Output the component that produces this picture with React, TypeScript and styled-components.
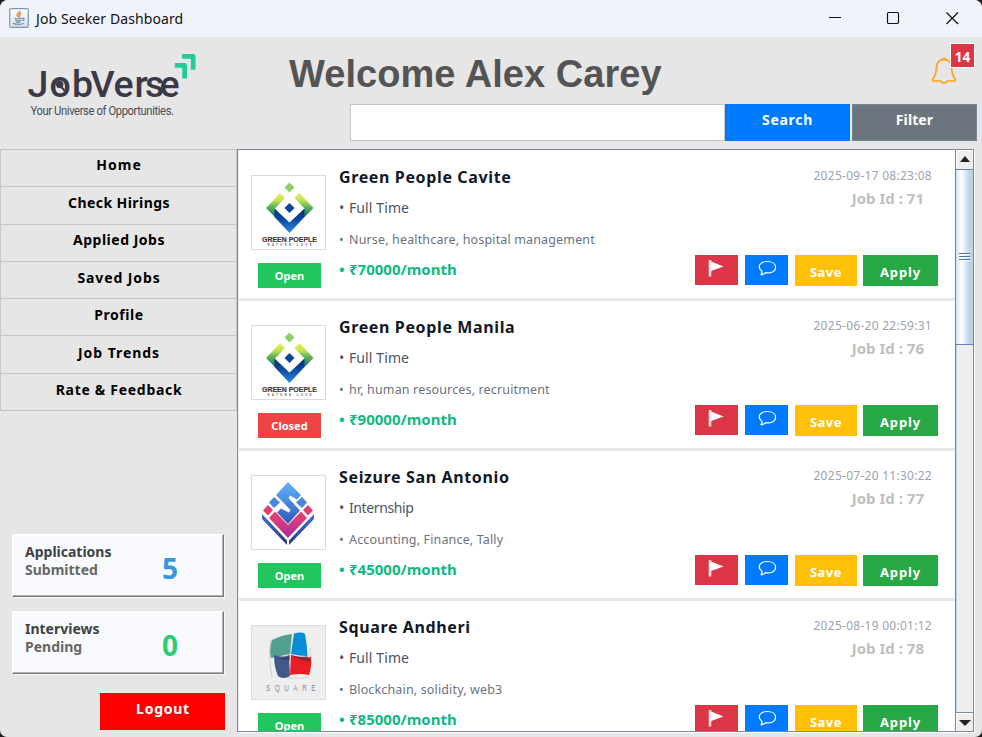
import React from 'react';
import styled, { createGlobalStyle } from 'styled-components';

const GlobalStyle = createGlobalStyle`
  * { box-sizing: border-box; }
  body { margin: 0; background: #1d1d20; font-family: "Noto Sans", "Open Sans", sans-serif; }
  button, input { font-family: inherit; margin: 0; padding: 0; border: 0; border-radius: 0; }
  svg { display: block; }
`;

const Window = styled.div`
  width: 982px;
  height: 737px;
  display: flex;
  flex-direction: column;
  overflow: hidden;
  background: #e6e6e6;
  border-radius: 8px 8px 7px 7px;
`;

const TitleBar = styled.header`
  height: 37px;
  flex: none;
  display: flex;
  align-items: center;
  padding: 0 16px 0 9px;
  background: #f0f3fa;
`;

const AppIcon = styled.svg`
  width: 20px;
  height: 20px;
  margin-top: -2px;
`;

const WindowTitle = styled.div`
  flex: 1;
  margin-left: 7px;
  font-size: 14px;
  letter-spacing: 0.1px;
  line-height: 20px;
  color: #111;
`;

const WindowControls = styled.div`
  display: flex;
  align-items: center;
  gap: 38px;
  margin-top: -1px;
  padding-right: 4px;
`;

const Header = styled.section`
  height: 112px;
  flex: none;
  display: flex;
`;

const Brand = styled.div`
  width: 237px;
  padding: 13px 0 0 26px;
`;

const HeaderMain = styled.div`
  flex: 1;
  display: flex;
  flex-direction: column;
`;

const HeaderTop = styled.div`
  height: 67px;
  display: flex;
  justify-content: space-between;
`;

const Welcome = styled.h1`
  margin: 15px 0 0 52px;
  font: bold 38px/44px "Liberation Sans", Arial, sans-serif;
  letter-spacing: 0.05px;
  color: #545454;
`;

const Notifications = styled.div`
  position: relative;
  width: 45px;
  margin-right: 7px;
  padding: 20px 0 0 1px;
`;

const Badge = styled.span`
  position: absolute;
  top: 6px;
  right: 0;
  width: 25px;
  height: 25px;
  border: 1px solid #fff;
  background: #dc3545;
  color: #fff;
  font-size: 13.5px;
  font-weight: 700;
  line-height: 26px;
  text-align: center;
`;

const SearchRow = styled.div`
  display: flex;
  height: 37px;
  margin-left: 113px;
`;

const SearchInput = styled.input`
  width: 375px;
  height: 37px;
  && { border: 1px solid #c6c6c6; }
  background: #fff;
  outline: none;
`;

const HeaderButton = styled.button<{ $bg: string; $edge?: string; $tracking?: number }>`
  width: 125px;
  height: 37px;
  && { border: 1px solid ${p => p.$edge ?? p.$bg}; padding-bottom: 6px; }
  background: ${p => p.$bg};
  color: #fff;
  font-size: 14px;
  font-weight: 700;
  line-height: 20px;
  letter-spacing: ${p => p.$tracking ?? 0}px;
  & + & { margin-left: 2px; }
`;

const Body = styled.div`
  flex: 1;
  min-height: 0;
  display: flex;
`;

const Sidebar = styled.aside`
  width: 237px;
  display: flex;
  flex-direction: column;
`;

const Nav = styled.nav`
  height: 262px;
  display: grid;
  grid-template-rows: repeat(7, 1fr);
  border: 1px solid #c8c8c8;
  border-top: 0;
`;

const NavItem = styled.button<{ $tracking: number }>`
  background: #e6e6e6;
  && { border-top: 1px solid #c6c6c6; padding: 0 0 5px 1px; box-shadow: 0 1px 0 #c6c6c6; }
  color: #000;
  font-size: 14px;
  font-weight: 700;
  line-height: 20px;
  letter-spacing: ${p => p.$tracking}px;
  &&:first-child { padding-bottom: 6px; }
  &&:nth-child(n + 4) { padding-bottom: 4px; }
`;

const Stats = styled.div`
  display: flex;
  flex-direction: column;
  gap: 13px;
  margin: 123px 0 0 12px;
`;

const StatCard = styled.div`
  width: 212px;
  height: 63px;
  display: flex;
  background: #f8fafd;
  border: 1px solid;
  border-color: #fff #7a7a7a #7a7a7a #fff;
  box-shadow: inset -1px -1px 0 #b0b0b0, inset 1px 1px 0 #fff, 1px 1px 0 #f8f8f8;
  & + & { margin-top: 1px; }
`;

const StatLabel = styled.div`
  width: 149px;
  padding: 7px 0 0 12px;
  font-size: 14px;
  font-weight: 700;
  line-height: 19px;
  color: #3f4246;
  span { display: block; margin-top: -1px; color: #666; }
`;

const StatValue = styled.div<{ $color: string }>`
  padding-top: 14px;
  font-size: 28px;
  font-weight: 700;
  line-height: 38px;
  color: ${p => p.$color};
`;

const Logout = styled.button`
  width: 125px;
  height: 37px;
  align-self: flex-end;
  && { margin: 19px 12px 0 0; padding: 0 0 5px 1px; }
  background: #f00;
  color: #fff;
  font-size: 14px;
  font-weight: 700;
  line-height: 20px;
  letter-spacing: 0.75px;
`;

const ScrollPane = styled.main`
  width: 737px;
  height: 583px;
  display: flex;
  border: 1px solid #7a8a99;
  box-shadow: 1px 1px 0 #fff;
  background: #fff;
`;

const JobList = styled.div`
  flex: 1;
  overflow: hidden;
  border-left: 1px solid #eef2f8;
  padding-top: 1px;
`;

const JobCard = styled.article`
  height: 150px;
  display: grid;
  grid-template-columns: 88px 1fr auto;
  padding: 0 17px 0 12px;
  background: #fff;
  border-bottom: 3px solid #e6e7eb;
`;

const LogoColumn = styled.div`
  display: flex;
  flex-direction: column;
  padding-top: 24px;
`;

const LogoFrame = styled.div<{ $bg?: string }>`
  width: 75px;
  height: 75px;
  border: 1px solid #dcdcdc;
  background: ${p => p.$bg ?? '#fff'};
`;

const Status = styled.span<{ $open: boolean }>`
  width: 63px;
  height: 25px;
  margin: 13px 0 0 7px;
  background: ${p => (p.$open ? '#22c55e' : '#ef4444')};
  color: #fff;
  font-size: 11px;
  font-weight: 700;
  line-height: 26px;
  text-align: center;
`;

const Details = styled.div`
  display: flex;
  flex-direction: column;
  white-space: nowrap;
`;

const JobTitle = styled.h2`
  margin: 16px 0 0;
  font-size: 16px;
  line-height: 20px;
  font-weight: 700;
  letter-spacing: 0.63px;
  color: #111827;
`;

const Bullet = styled.span`
  display: inline-block;
  width: 10px;
  letter-spacing: 0;
`;

const JobType = styled.div<{ $tracking: number }>`
  margin-top: 11px;
  font-size: 14px;
  line-height: 20px;
  letter-spacing: ${p => p.$tracking}px;
  color: #4b5563;
`;

const Skills = styled.div`
  margin-top: 12px;
  font-size: 12.5px;
  line-height: 20px;
  letter-spacing: 0.15px;
  color: #6b7280;
`;

const Salary = styled.div`
  margin-top: 9px;
  font-size: 15px;
  line-height: 20px;
  font-weight: 700;
  color: #10b981;
`;

const Side = styled.div`
  display: flex;
  flex-direction: column;
  align-items: flex-end;
`;

const PostedAt = styled.time`
  margin: 15px 6px 0 0;
  font-size: 12px;
  line-height: 20px;
  letter-spacing: 0.27px;
  color: #9ca3af;
`;

const JobId = styled.div`
  margin: 2px 14px 0 0;
  font-size: 15px;
  line-height: 20px;
  font-weight: 700;
  color: #bfbfbf;
`;

const Actions = styled.div`
  display: flex;
  margin-top: 47px;
`;

const ActionButton = styled.button<{ $bg: string; $width: number; $gap?: number; $tracking?: number }>`
  width: ${p => p.$width}px;
  height: 31px;
  && { margin-left: ${p => p.$gap ?? 0}px; padding-top: 3px; }
  background: ${p => p.$bg};
  color: #fff;
  font-size: 13px;
  font-weight: 700;
  line-height: 20px;
  letter-spacing: ${p => p.$tracking ?? 0}px;
`;

const IconButton = styled(ActionButton)`
  height: 30px;
  && { padding: 5px 0 0 13px; }
  display: flex;
  align-items: flex-start;
`;

const ScrollBar = styled.div`
  width: 18px;
  display: flex;
  flex-direction: column;
  background: #eee;
  border-left: 1px solid #7a8a99;
`;

const ArrowButton = styled.div<{ $end?: boolean }>`
  height: 18px;
  display: flex;
  align-items: center;
  justify-content: center;
  background: #eee;
  border: solid #fff;
  border-width: 1px 0 0 1px;
  ${p => (p.$end ? 'box-shadow: 0 -1px 0 #7a8a99;' : 'padding: 0 1px 2px 0;')}
`;

const Thumb = styled.div`
  height: 176px;
  display: flex;
  flex-direction: column;
  align-items: center;
  justify-content: center;
  gap: 1px;
  margin-top: 1px;
  margin-left: -1px;
  border: 1px solid #6382bf;
  border-right: 0;
  background: linear-gradient(90deg, #d3e2f1 0, #fff 32%, #f4f8fc 42%, #c4d8ec 72%, #b8cfe5 100%);
`;

const Grip = styled.div`
  width: 11px;
  height: 2px;
  border-top: 1px solid #4f70b2;
  background: #fff;
`;

const Track = styled.div`
  flex: 1;
  border-left: 1px solid #b8cfe5;
`;

const JavaIcon = () => (
  <AppIcon viewBox="0 0 20 20">
    <defs>
      <linearGradient id="cupbg" x1="0" y1="0" x2="0" y2="1">
        <stop offset="0" stopColor="#fff" />
        <stop offset="1" stopColor="#d5dde2" />
      </linearGradient>
    </defs>
    <rect x=".7" y=".7" width="18.6" height="18.6" rx="1.6" fill="url(#cupbg)" stroke="#7c9bb2" strokeWidth="1.2" />
    <path d="M10.6 2.8c.8 1.700-3 2.800-2.400 4.500.2.800 1 1.400 1.400 2.100M12.200 5.200c-1.300.6-2.400 1.500-1.700 2.500.4.700.2 1.200-.3 1.700" fill="none" stroke="#ee8c3c" strokeWidth="1.500" />
    <path d="M5.500 10.300c1.800.8 5.500.7 7.400 0M6.200 12.200c1.800.7 4.400.7 6 0M7 14c1.300.5 3.200.5 4.500 0M4.200 15.200c1.800 1.400 8.400 1.500 10.600.2M13.200 10.200c2.600-.6 2.600 2-.2 2.600" fill="none" stroke="#5e88ad" strokeWidth="1.100" />
  </AppIcon>
);

const BrandLogo = () => (
  <svg width="176" height="72" viewBox="26 50 176 72">
    <text x="27.500 49.500 72 90.500 113.500 134.500 145 159.500" y="97" fontFamily="Roboto, sans-serif" fontSize="37.500" fontWeight="500" fill="#3b3948">JobVerse</text>
    <circle cx="59.700" cy="84.500" r="3.700" fill="#3b3948" />
    <path d="M60.500 86L64.500 90.500" stroke="#3b3948" strokeWidth="2" />
    <g fill="none" stroke="#1fcd9a" strokeWidth="4.700" strokeLinejoin="round">
      <path d="M182 56.300H193.200V69.800" />
      <path d="M174.800 65.300H184.600V78.500" />
    </g>
    <text transform="translate(30.500 115) scale(.9 1)" x="0" y="0" fontFamily="Roboto, sans-serif" fontSize="12.500" fill="#4c4c55" textLength="159.500" lengthAdjust="spacing">Your Universe of Opportunities.</text>
  </svg>
);

const BellIcon = () => (
  <svg width="26" height="28" viewBox="0 0 26 28" fill="none" stroke="#ffa514" strokeWidth="1.700" strokeLinejoin="round">
    <path d="M10.800 2.700Q13 .4 15.200 2.700Q19.800 4.200 20.500 9.500C20.800 15 21 18.500 23.600 21.200Q25.500 23.800 23.500 24H16Q15.300 26 13 26Q10.700 26 10 24H2.500Q.5 23.800 2.400 21.200C5 18.500 5.200 15 5.500 9.500Q6.200 4.200 10.800 2.700Z" />
    <path d="M10.800 2.700Q13 .4 15.200 2.700Z" fill="#ffa514" />
  </svg>
);

const GreenLogo = () => (
  <svg width="73" height="73" viewBox="0 0 73 73">
    <defs>
      <linearGradient id="gl" x1="0" y1="0" x2="0" y2="1">
        <stop offset="0" stopColor="#e6f04c" />
        <stop offset=".3" stopColor="#c6e354" />
        <stop offset=".55" stopColor="#6ab75a" />
        <stop offset="1" stopColor="#087468" />
      </linearGradient>
      <linearGradient id="gb" x1="0" y1="0" x2="0" y2="1">
        <stop offset="0" stopColor="#062a78" />
        <stop offset=".4" stopColor="#0b469c" />
        <stop offset="1" stopColor="#2b8bdc" />
      </linearGradient>
    </defs>
    <path d="M37.500 6.500L42.500 11.500L37.500 16.500L32.500 11.500Z" fill="#8ed063" />
    <path d="M28 17L33 22L23 32.500L26 38L23 41L14 32Z" fill="url(#gl)" />
    <path d="M47.500 17L61.500 32L52.500 41L49.500 38L52.500 32.500L42.500 22Z" fill="url(#gl)" />
    <path d="M22.500 32.500L37.500 46.500L52.500 32.500V41L37.500 57L22.500 41Z" fill="url(#gb)" />
    <path d="M37.500 27L42.500 32L37.500 37L32.500 32Z" fill="#064797" />
    <text x="10" y="65.500" fontFamily="Liberation Sans, sans-serif" fontSize="7.200" fontWeight="700" fill="#453a3a" stroke="#453a3a" strokeWidth=".2" textLength="55" lengthAdjust="spacingAndGlyphs">GREEN POEPLE</text>
    <text x="15.500" y="69.800" fontFamily="Liberation Sans, sans-serif" fontSize="2.600" fontWeight="700" fill="#555" textLength="44">NATURE LOVE</text>
  </svg>
);

const SeizureLogo = () => (
  <svg width="73" height="73" viewBox="0 0 73 73">
    <defs>
      <linearGradient id="sb" x1="0" y1="0" x2="0" y2="1">
        <stop offset="0" stopColor="#62b5ff" />
        <stop offset="1" stopColor="#3057b5" />
      </linearGradient>
      <linearGradient id="sp" x1="0" y1="0" x2="0" y2="1">
        <stop offset="0" stopColor="#ee4268" />
        <stop offset="1" stopColor="#a92ca5" />
      </linearGradient>
      <linearGradient id="sd" x1="0" y1="0" x2="0" y2="1">
        <stop offset="0" stopColor="#3d70cc" />
        <stop offset="1" stopColor="#28378c" />
      </linearGradient>
    </defs>
    <path d="M36 6L49 19L45 23.500L38 19.500L36.500 22L48 34.500L36 48L25 36.500L29 32.500L37 36.500L38.500 34L24 19Z" fill="url(#sb)" />
    <path d="M22 21L28 26.500L22 32L17 26.500ZM50 21L55 26.500L50 32L44 26.500Z" fill="#4785df" />
    <path d="M16 29L21 34L16 39.500L11 34.500ZM56 29L61 34.500L56 39.500L51 34Z" fill="#e33b72" />
    <path d="M23 35.500L36 49L49 35.500L55 42L36 62L17 42Z" fill="url(#sp)" />
    <path d="M10 38L35 64.500V69L10 43ZM62 38L37 64.500V69L62 43Z" fill="url(#sd)" />
  </svg>
);

const SquareLogo = () => (
  <svg width="73" height="73" viewBox="0 0 73 73">
    <path d="M19 14Q16 30 20 51M25 50Q42 54 57 51M58 22Q60 35 57 50" fill="none" stroke="#dbcaca" strokeWidth="1" />
    <path d="M20 14Q30 9 40 8L38 28L19 32Q17 24 20 14Z" fill="#51a08e" />
    <path d="M42 7.500Q50 5.500 53 8Q55 18 55.500 30Q47 30 39 28Z" fill="#078ed8" />
    <path d="M22 29Q31 32 37 29L38 50Q31 54 26 50Q22 41 22 29Z" fill="#40598a" />
    <path d="M39 29Q49 32 59 31Q60 40 57 49Q48 47 38 49Z" fill="#ec1c24" />
    <path d="M22 30Q31 35 38 29V34Q29 35 22 30ZM39 29Q48 32 55 30L59 36Q49 35 39 29Z" fill="#263449" opacity=".5" />
    <text transform="translate(14 64.500) scale(.75 1)" x="0" y="0" fontFamily="Liberation Sans, sans-serif" fontSize="8.500" fill="#8088a0" textLength="66">SQUARE</text>
  </svg>
);

const FlagIcon = () => (
  <svg width="16" height="18" viewBox="0 0 16 18">
    <path d="M2 0V16.500" stroke="#f8dbe6" strokeWidth="2.600" />
    <path d="M2.500 1.300L15.500 6.500L2.500 11.200Z" fill="#fff" />
  </svg>
);

const ChatIcon = () => (
  <svg width="19" height="16" viewBox="0 0 19 16" fill="none" stroke="#fff" strokeWidth="1.200">
    <path d="M3.800 11.300C-1.200 7 1.600 1.500 9.300 1.500C14.500 1.500 17.600 4 17.600 7.300C17.600 11.500 12.800 13.600 7.600 12.700Q5.800 14.800 3 14.700Q4.500 13 3.800 11.300Z" strokeLinejoin="round" />
  </svg>
);

const logos = { green: GreenLogo, seizure: SeizureLogo, square: SquareLogo };

type Job = {
  title: string;
  type: string;
  skills: string;
  salary: string;
  open: boolean;
  posted: string;
  id: number;
  logo: keyof typeof logos;
};

const jobs: Job[] = [
  { title: 'Green People Cavite', type: 'Full Time', skills: 'Nurse, healthcare, hospital management', salary: '₹70000/month', open: true, posted: '2025-09-17 08:23:08', id: 71, logo: 'green' },
  { title: 'Green People Manila', type: 'Full Time', skills: 'hr, human resources, recruitment', salary: '₹90000/month', open: false, posted: '2025-06-20 22:59:31', id: 76, logo: 'green' },
  { title: 'Seizure San Antonio', type: 'Internship', skills: 'Accounting, Finance, Tally', salary: '₹45000/month', open: true, posted: '2025-07-20 11:30:22', id: 77, logo: 'seizure' },
  { title: 'Square Andheri', type: 'Full Time', skills: 'Blockchain, solidity, web3', salary: '₹85000/month', open: true, posted: '2025-08-19 00:01:12', id: 78, logo: 'square' },
];

const navItems: [string, number][] = [
  ['Home', 1],
  ['Check Hirings', 0.42],
  ['Applied Jobs', 0.5],
  ['Saved Jobs', 0.9],
  ['Profile', 0.55],
  ['Job Trends', 0.95],
  ['Rate & Feedback', 0.7],
];

const JobRow = ({ job }: { job: Job }) => {
  const Logo = logos[job.logo];
  return (
    <JobCard>
      <LogoColumn>
        <LogoFrame $bg={job.logo === 'square' ? '#eee' : undefined}><Logo /></LogoFrame>
        <Status $open={job.open}>{job.open ? 'Open' : 'Closed'}</Status>
      </LogoColumn>
      <Details>
        <JobTitle>{job.title}</JobTitle>
        <JobType $tracking={job.type === 'Internship' ? -0.4 : 0.1}><Bullet>•</Bullet>{job.type}</JobType>
        <Skills><Bullet>•</Bullet>{job.skills}</Skills>
        <Salary><Bullet>•</Bullet>{job.salary}</Salary>
      </Details>
      <Side>
        <PostedAt>{job.posted}</PostedAt>
        <JobId>Job Id : {job.id}</JobId>
        <Actions>
          <IconButton $bg="#dc3545" $width={43} aria-label="Report"><FlagIcon /></IconButton>
          <IconButton $bg="#007bff" $width={43} $gap={7} aria-label="Message"><ChatIcon /></IconButton>
          <ActionButton $bg="#ffc107" $width={62} $gap={7} $tracking={0.5}>Save</ActionButton>
          <ActionButton $bg="#28a745" $width={75} $gap={6} $tracking={0.9}>Apply</ActionButton>
        </Actions>
      </Side>
    </JobCard>
  );
};

export default function App() {
  return (
    <>
      <GlobalStyle />
      <Window>
        <TitleBar>
          <JavaIcon />
          <WindowTitle>Job Seeker Dashboard</WindowTitle>
          <WindowControls>
            <svg width="21" height="14" fill="none" stroke="#111" strokeWidth="1"><path d="M4 6.500H16" /></svg>
            <svg width="20" height="14" fill="none" stroke="#111" strokeWidth="1.200"><rect x="3.500" y="1.500" width="11" height="11" rx="1.200" /></svg>
            <svg width="20" height="14" fill="none" stroke="#111" strokeWidth="1.200"><path d="M4.500 1.500L16 13M16 1.500L4.500 13" /></svg>
          </WindowControls>
        </TitleBar>
        <Header>
          <Brand><BrandLogo /></Brand>
          <HeaderMain>
            <HeaderTop>
              <Welcome>Welcome Alex Carey</Welcome>
              <Notifications><BellIcon /><Badge>14</Badge></Notifications>
            </HeaderTop>
            <SearchRow>
              <SearchInput aria-label="Search jobs" />
              <HeaderButton $bg="#007bff" $tracking={0.7}>Search</HeaderButton>
              <HeaderButton $bg="#6c757d" $edge="#748697" $tracking={0.1}>Filter</HeaderButton>
            </SearchRow>
          </HeaderMain>
        </Header>
        <Body>
          <Sidebar>
            <Nav>
              {navItems.map(([label, tracking]) => (
                <NavItem key={label} $tracking={tracking}>{label}</NavItem>
              ))}
            </Nav>
            <Stats>
              <StatCard>
                <StatLabel>Applications<span>Submitted</span></StatLabel>
                <StatValue $color="#3498db">5</StatValue>
              </StatCard>
              <StatCard>
                <StatLabel>Interviews<span>Pending</span></StatLabel>
                <StatValue $color="#2ecc71">0</StatValue>
              </StatCard>
            </Stats>
            <Logout>Logout</Logout>
          </Sidebar>
          <ScrollPane>
            <JobList>
              {jobs.map(job => <JobRow key={job.id} job={job} />)}
            </JobList>
            <ScrollBar>
              <ArrowButton><svg width="12" height="6"><path d="M1 6L6 0L11 6Z" fill="#222" /></svg></ArrowButton>
              <Thumb><Grip /><Grip /><Grip /></Thumb>
              <Track />
              <ArrowButton $end><svg width="12" height="6"><path d="M0 0L6 6L12 0Z" fill="#222" /></svg></ArrowButton>
            </ScrollBar>
          </ScrollPane>
        </Body>
      </Window>
    </>
  );
}
